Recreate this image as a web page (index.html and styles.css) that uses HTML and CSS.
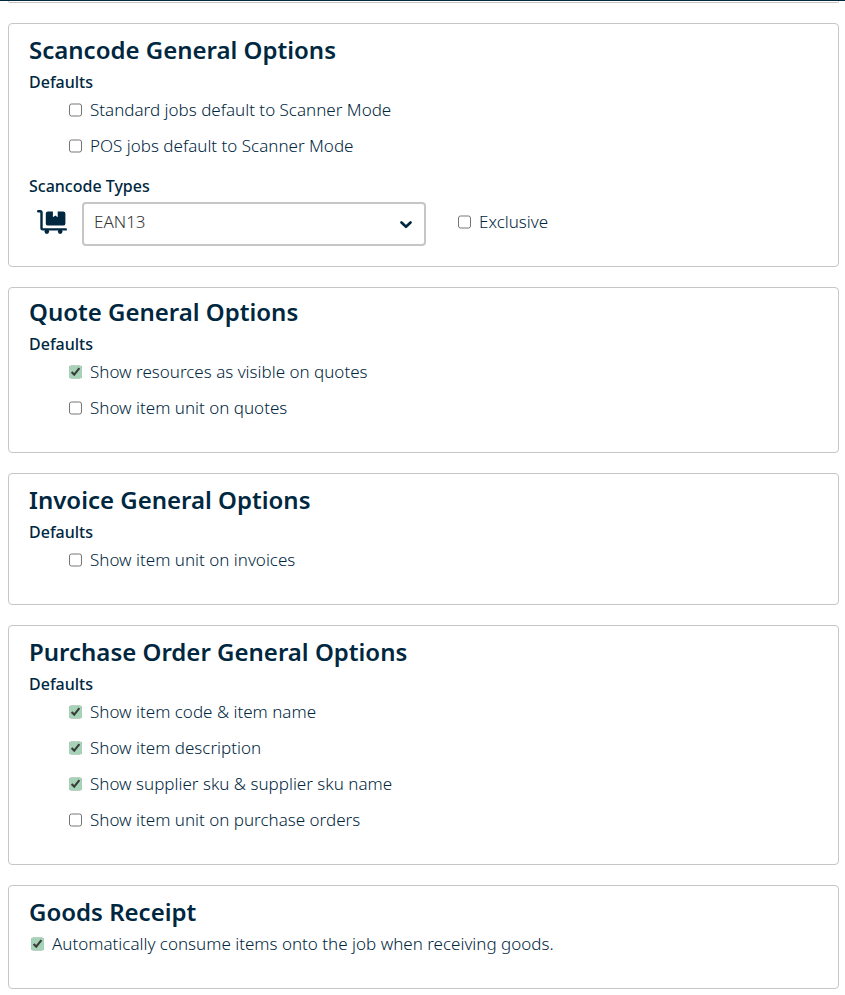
FILE: index.html
```html
<!DOCTYPE html>
<html lang="en">
<head>
<meta charset="utf-8">
<meta name="viewport" content="width=device-width, initial-scale=1">
<title>General Options</title>
<link rel="stylesheet" href="styles.css">
</head>
<body>
<header class="topbar"></header>
<main class="page">
  <div class="card card-end"></div>

  <section class="card card-scancode">
    <h2>Scancode General Options</h2>
    <h3>Defaults</h3>
    <div class="options">
      <label class="option"><input type="checkbox"><span>Standard jobs default to Scanner Mode</span></label>
      <label class="option"><input type="checkbox"><span>POS jobs default to Scanner Mode</span></label>
    </div>
    <h3 class="types-title"><label for="scancode-type">Scancode Types</label></h3>
    <div class="types">
      <svg class="cart" viewBox="0 0 30 24" aria-hidden="true">
        <path d="M1.2 1.2H3.2Q4.5 1.2 4.5 2.5V18.2Q4.5 19.4 5.7 19.4H28.8" fill="none" stroke="currentColor" stroke-width="2.4" stroke-linecap="round"/>
        <path d="M11 1.4H15.9V7.2L18.3 5.6L20.7 7.2V1.4H26.2Q28.4 1.4 28.4 3.6V13.4Q28.4 15.6 26.2 15.6H11Q8.8 15.6 8.8 13.4V3.6Q8.8 1.4 11 1.4Z" fill="currentColor"/>
        <circle cx="9.8" cy="21.6" r="2.3" fill="currentColor"/>
        <circle cx="23.2" cy="21.6" r="2.3" fill="currentColor"/>
      </svg>
      <div class="select">
        <select id="scancode-type"><option>EAN13</option></select>
        <svg class="chevron" viewBox="0 0 12 8" aria-hidden="true"><path d="M1.5 1.5L6 5.8L10.5 1.5" fill="none" stroke="currentColor" stroke-width="2.6" stroke-linecap="round" stroke-linejoin="round"/></svg>
      </div>
      <label class="option"><input type="checkbox"><span>Exclusive</span></label>
    </div>
  </section>

  <section class="card card-quote">
    <h2>Quote General Options</h2>
    <h3>Defaults</h3>
    <div class="options">
      <label class="option"><input type="checkbox" checked><span>Show resources as visible on quotes</span></label>
      <label class="option"><input type="checkbox"><span>Show item unit on quotes</span></label>
    </div>
  </section>

  <section class="card">
    <h2>Invoice General Options</h2>
    <h3>Defaults</h3>
    <div class="options">
      <label class="option"><input type="checkbox"><span>Show item unit on invoices</span></label>
    </div>
  </section>

  <section class="card">
    <h2>Purchase Order General Options</h2>
    <h3>Defaults</h3>
    <div class="options">
      <label class="option"><input type="checkbox" checked><span>Show item code &amp; item name</span></label>
      <label class="option"><input type="checkbox" checked><span>Show item description</span></label>
      <label class="option"><input type="checkbox" checked><span>Show supplier sku &amp; supplier sku name</span></label>
      <label class="option"><input type="checkbox"><span>Show item unit on purchase orders</span></label>
    </div>
  </section>

  <section class="card">
    <h2>Goods Receipt</h2>
    <div class="receipt">
      <label class="option"><input type="checkbox" checked><span>Automatically consume items onto the job when receiving goods.</span></label>
    </div>
  </section>
</main>
</body>
</html>
```
FILE: styles.css
```css
* {
  box-sizing: border-box;
}

body {
  margin: 0;
  background: #fff;
  color: #002740;
  font-family: "Noto Sans", "Open Sans", sans-serif;
  font-size: 17px;
  font-weight: 300;
}

.topbar {
  height: 1px;
  background: #002740;
}

.page {
  display: flex;
  flex-direction: column;
  gap: 20px;
  padding: 0 6px 6px 8px;
}

.card {
  padding: 12px 20px 26px;
  border: 1px solid #c6c6c6;
  border-radius: 4px;
}

.card-end {
  padding: 0;
  border-top: 0;
  border-radius: 0 0 4px 4px;
  height: 2px;
}

.card-scancode {
  padding-bottom: 20px;
}

.card-quote {
  padding-top: 10px;
}

h2 {
  margin: 0;
  font-size: 24px;
  line-height: 28px;
  font-weight: 600;
}

h3 {
  margin: 8px 0 0;
  font-size: 16px;
  line-height: 20px;
  font-weight: 500;
}

.options {
  padding-left: 40px;
}

.receipt {
  padding-left: 2px;
}

.option {
  display: flex;
  align-items: center;
  gap: 8px;
  min-height: 36px;
  line-height: 24px;
}

.option input {
  flex: none;
  width: 13px;
  height: 14px;
  margin: 0;
  accent-color: #a6d3b7;
}

.types-title {
  margin-top: 12px;
}

.types {
  display: flex;
  align-items: center;
  margin-top: 6px;
  padding-left: 8px;
}

.cart,
.types .option {
  margin-bottom: 4px;
}

.cart {
  flex: none;
  width: 30px;
  height: 24px;
  margin-right: 15px;
}

.select {
  position: relative;
  flex: 0 1 344px;
  margin-right: 32px;
}

.select select {
  display: block;
  width: 100%;
  height: 44px;
  padding: 0 36px 5px 10px;
  border: 2px solid #c6c6c6;
  border-radius: 4px;
  appearance: none;
  background: #fff;
  color: #333;
  font: inherit;
}

.chevron {
  position: absolute;
  right: 14px;
  top: 19px;
  width: 12px;
  height: 8px;
  pointer-events: none;
}
```
